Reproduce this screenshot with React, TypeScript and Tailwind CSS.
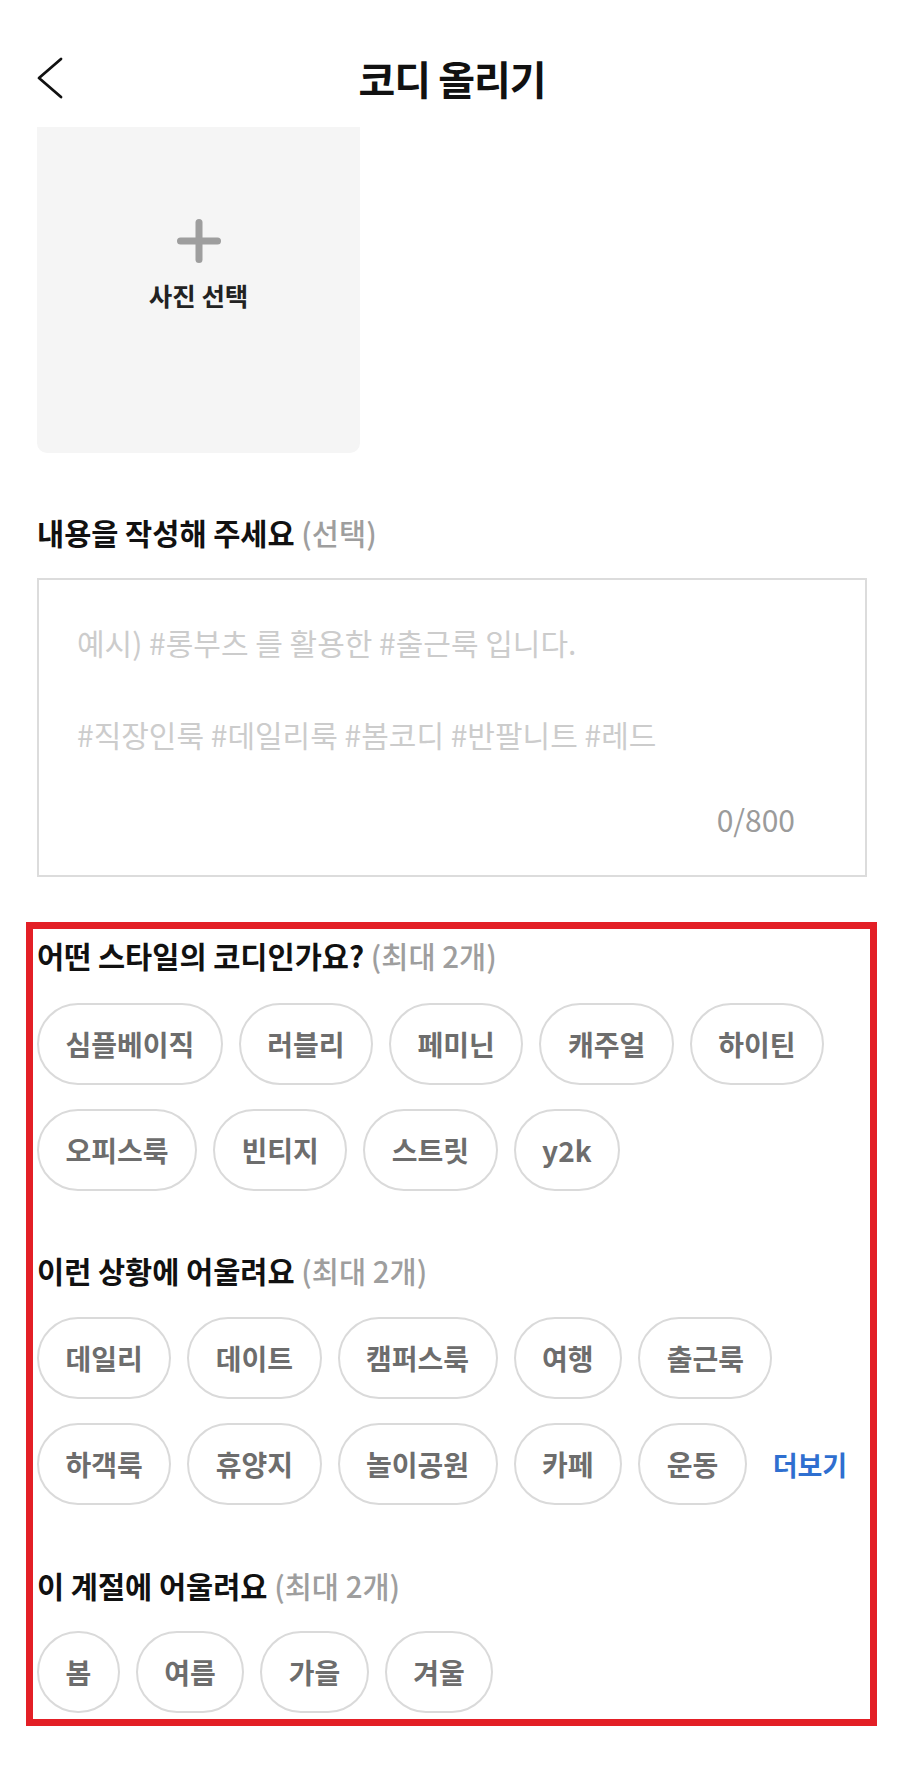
import React from 'react';

const styles = ['심플베이직', '러블리', '페미닌', '캐주얼', '하이틴', '오피스룩', '빈티지', '스트릿', 'y2k'];
const situations = ['데일리', '데이트', '캠퍼스룩', '여행', '출근룩', '하객룩', '휴양지', '놀이공원', '카페', '운동'];
const seasons = ['봄', '여름', '가을', '겨울'];

const Chip = ({ label }: { label: string }) => (
  <button
    type="button"
    className="h-[82px] px-[26.5px] rounded-full border-2 border-[#dadada] bg-white flex items-center justify-center text-[28px] leading-none font-semibold text-[#6d6d6d]"
  >
    {label}
  </button>
);

const SectionTitle = ({ title }: { title: string }) => (
  <h2 className="text-[29.5px] leading-[36px] font-bold text-[#111]">
    {title} <span className="font-medium text-[#9e9e9e]">(최대 2개)</span>
  </h2>
);

const App = () => {
  return (
    <div className="min-h-[1773px] bg-white font-['Noto_Sans_CJK_KR','Noto_Sans',sans-serif] pl-[37px] pr-[33px]">
      {/* header */}
      <header className="h-[127px] pt-[52px]">
        <div className="grid grid-cols-[1fr_auto_1fr] items-center h-[52px]">
          <button type="button" className="w-[26px] h-[42px] flex items-center">
            <svg width="26" height="42" viewBox="0 0 26 42" fill="none">
              <polyline points="24,2 2,21 24,40" stroke="#111" strokeWidth="2.8" strokeLinecap="round" strokeLinejoin="round" />
            </svg>
          </button>
          <h1 className="text-[40px] leading-[52px] font-bold text-[#111] tracking-[-1px]">코디 올리기</h1>
          <div />
        </div>
      </header>

      {/* photo picker */}
      <div className="w-[323px] h-[326px] bg-[#f5f5f5] rounded-b-[10px] flex flex-col items-center pt-[92px]">
        <svg width="44" height="44" viewBox="0 0 44 44" fill="none">
          <line x1="22" y1="3.5" x2="22" y2="40.5" stroke="#9e9e9e" strokeWidth="7" strokeLinecap="round" />
          <line x1="3.5" y1="22" x2="40.5" y2="22" stroke="#9e9e9e" strokeWidth="7" strokeLinecap="round" />
        </svg>
        <span className="mt-[15px] text-[25.5px] leading-[34px] font-bold text-[#222]">사진 선택</span>
      </div>

      {/* description */}
      <p className="mt-[61px] text-[29.5px] leading-[36px] font-bold text-[#111]">
        내용을 작성해 주세요 <span className="font-medium text-[#9e9e9e]">(선택)</span>
      </p>
      <div className="mt-[28px] h-[299px] border-2 border-[#dcdcdc] flex flex-col pt-[39px] pb-[38px]">
        <textarea
          className="flex-1 px-[38px] resize-none outline-none text-[30px] leading-[46px] text-[#333] placeholder:text-[#cccccc] bg-transparent"
          placeholder={'예시) #롱부츠 를 활용한 #출근룩 입니다.\n\n#직장인룩 #데일리룩 #봄코디 #반팔니트 #레드'}
        />
        <div className="self-end pr-[70px] text-[30px] leading-[36px] text-[#9b9b9b]">0/800</div>
      </div>

      {/* tag selection */}
      <section className="mt-[45px] -ml-[11px] -mr-[10px] border-[7px] border-[#e31f26] pl-[4px] pt-[8px] pb-[6px]">
        <SectionTitle title="어떤 스타일의 코디인가요?" />
        <div className="mt-[30px] flex flex-wrap gap-x-[16px] gap-y-[24px]">
          {styles.map((s) => (
            <Chip key={s} label={s} />
          ))}
        </div>

        <div className="mt-[61px]">
          <SectionTitle title="이런 상황에 어울려요" />
        </div>
        <div className="mt-[29px] flex flex-wrap items-center gap-x-[16px] gap-y-[24px]">
          {situations.map((s) => (
            <Chip key={s} label={s} />
          ))}
          <button type="button" className="ml-[10px] text-[27px] leading-none font-bold text-[#2f6fd0]">
            더보기
          </button>
        </div>

        <div className="mt-[62px]">
          <SectionTitle title="이 계절에 어울려요" />
        </div>
        <div className="mt-[28px] flex flex-wrap gap-x-[16px] gap-y-[24px]">
          {seasons.map((s) => (
            <Chip key={s} label={s} />
          ))}
        </div>
      </section>
    </div>
  );
};

export default App;
